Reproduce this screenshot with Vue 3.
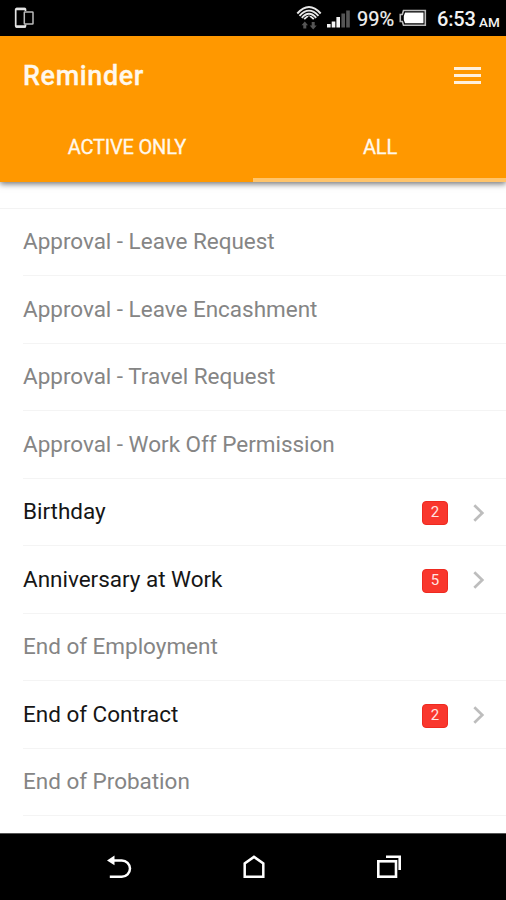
<script setup>
const reminders = [
  { label: 'Approval - Leave Request' },
  { label: 'Approval - Leave Encashment' },
  { label: 'Approval - Travel Request' },
  { label: 'Approval - Work Off Permission' },
  { label: 'Birthday', count: 2 },
  { label: 'Anniversary at Work', count: 5 },
  { label: 'End of Employment' },
  { label: 'End of Contract', count: 2 },
  { label: 'End of Probation' },
]
</script>

<template>
  <div class="phone">
    <div class="status">
      <svg class="device" width="20" height="22" viewBox="0 0 20 22" fill="none" stroke="#e4e4e4">
        <path d="M11.500 4V2.600Q11.500 1.600 10.500 1.600H2.800Q1.700 1.600 1.700 2.600V19Q1.700 20 2.800 20H10.500Q11.500 20 11.500 19V17.500" stroke-width="1.700" />
        <path d="M2 2H11.500M2 19.500H11.500" stroke-width="2.400" />
        <rect x="10.300" y="5" width="8.700" height="12" rx=".6" stroke-width="1.500" stroke="#bbb" />
      </svg>
      <svg class="wifi" width="26" height="26" viewBox="0 0 26 26" fill="none">
        <g stroke="#e8e8e8" stroke-width="1.900">
          <path d="M1.300 8.500Q13 -4.500 24.700 8.500" />
          <path d="M3.500 10.800Q13 .5 22.500 10.800" />
          <path d="M5.800 12.800Q13 4.800 20.200 12.800" />
          <path d="M8.200 14.200Q13 8.800 17.800 14.200" />
        </g>
        <path d="M9 15.500L13 10.800L17 15.500Z" fill="#000" />
        <g fill="#555">
          <path d="M8.800 16.500L12 20.200H10.300V23.500H7.300V20.200H5.500Z" />
          <path d="M17.200 24.500L20.700 20.500H18.700V17H15.700V20.500H13.700Z" />
        </g>
      </svg>
      <svg class="signal" width="24" height="20" viewBox="0 0 24 20">
        <g fill="#f4f4f4">
          <rect x="0" y="15" width="3.600" height="3.500" />
          <rect x="4.700" y="12.500" width="3.600" height="6" />
          <rect x="9.400" y="8" width="3.600" height="10.500" />
        </g>
        <g fill="#555">
          <rect x="14.400" y="4.500" width="3.600" height="14" />
          <rect x="19.200" y="1.500" width="3.600" height="17" />
        </g>
      </svg>
      <span class="percent">99%</span>
      <svg class="battery" width="28" height="18" viewBox="0 0 28 18">
        <path d="M4.500 1.500H26.300V16.300H4.500L3.300 12.500H1.300V5.500H3.300Z" fill="none" stroke="#bbb" stroke-width="1.600" />
        <path d="M6 3.500H24.500V14.300H6L4.800 11V7Z" fill="#fff" />
      </svg>
      <span class="clock">6:53</span><span class="meridiem">AM</span>
    </div>

    <header>
      <div class="bar">
        <h1>Reminder</h1>
        <button class="menu" aria-label="Menu"><i /><i /><i /></button>
      </div>
      <nav>
        <button class="tab"><span>ACTIVE ONLY</span></button>
        <button class="tab selected"><span>ALL</span></button>
      </nav>
    </header>

    <main>
      <ul>
        <li v-for="item in reminders" :key="item.label" :class="{ on: item.count }">
          <span class="label">{{ item.label }}</span>
          <template v-if="item.count">
            <span class="badge">{{ item.count }}</span>
            <svg class="chevron" width="12" height="18" viewBox="0 0 12 18" fill="none" stroke="#bdbdbd" stroke-width="2.700">
              <path d="M1.300 1.200L9.300 9L1.300 16.800" />
            </svg>
          </template>
        </li>
      </ul>
    </main>

    <footer>
      <svg width="26" height="26" viewBox="0 0 26 26" fill="none" stroke="#fff" stroke-width="2.500">
        <path d="M8 6.400H15.800A8.200 8.200 0 0 1 15.800 22.800H3.800" />
        <path d="M1 6.400L8.500 1.600V11.200Z" fill="#fff" stroke="none" />
      </svg>
      <svg width="26" height="26" viewBox="0 0 26 26" fill="none" stroke="#fff" stroke-width="2.500">
        <path d="M3.700 22.800V9.500L13 2.900L22.300 9.500V22.800Z" />
      </svg>
      <svg width="26" height="26" viewBox="0 0 26 26" fill="none" stroke="#fff" stroke-width="2.600">
        <rect x="2.300" y="7.300" width="17.700" height="15.400" />
        <path d="M10 2.800H23.700V16" />
      </svg>
    </footer>
  </div>
</template>

<style>
body { margin: 0; background: #fff; }
</style>

<style scoped>
.phone {
  width: 506px;
  height: 900px;
  display: flex;
  flex-direction: column;
  overflow: hidden;
  background: #fff;
  font-family: Roboto, sans-serif;
}
button { border: 0; padding: 0; background: none; font: inherit; color: inherit; }
.status {
  height: 36px;
  flex: none;
  display: flex;
  align-items: center;
  background: #000;
  color: #f2f2f2;
  white-space: nowrap;
}
.device { margin: 0 auto 0 14px; }
.wifi { margin-right: 5px; }
.signal { margin: 1px 6px 0 0; }
.percent { width: 38px; font-size: 20px; line-height: 36px; padding-top: 2px; margin-right: 4px; -webkit-text-stroke: .2px currentColor; }
.battery { margin-right: 10px; }
.clock { width: 40px; font-size: 20px; font-weight: 500; padding-top: 2px; letter-spacing: -.2px; }
.meridiem { width: 21px; font-size: 13.500px; font-weight: 500; padding-top: 7px; margin: 0 6px 0 2px; }
header {
  height: 146px;
  flex: none;
  display: flex;
  flex-direction: column;
  background: #ff9800;
  color: #fff8ec;
  box-shadow: 0 2px 6px rgba(0, 0, 0, .55);
}
.bar { height: 78px; display: flex; align-items: center; justify-content: space-between; padding: 0 25px 0 23px; }
h1 { margin: 2px 0 0; font-size: 27px; line-height: 32px; font-weight: 500; letter-spacing: .6px; -webkit-text-stroke: .3px currentColor; }
.menu { width: 27px; display: flex; flex-direction: column; gap: 4px; }
.menu i { height: 3px; background: #fff0dc; }
nav { flex: 1; display: flex; }
.tab { flex: 1; display: flex; justify-content: center; padding-top: 21px; box-sizing: border-box; font-size: 20px; line-height: 24px; letter-spacing: -.2px; border-bottom: 4px solid transparent; -webkit-text-stroke: .3px currentColor; }
.tab span { margin-left: 1px; }
.tab.selected { border-bottom-color: #ffc46b; }
main { flex: 1; padding-top: 26px; }
ul { list-style: none; margin: 0; padding: 0 0 0 23px; border-top: 1px solid #f3f3f3; }
li {
  height: 67.440px;
  box-sizing: border-box;
  display: flex;
  align-items: center;
  padding-right: 21px;
  border-bottom: 1px solid #f4f4f4;
  color: #858585;
  font-size: 22.500px;
}
li.on { color: #161616; }
.label { flex: 1; letter-spacing: -.02px; padding-bottom: 1.500px; }
.badge {
  width: 26px;
  height: 24px;
  box-sizing: border-box;
  margin: 3px 25px 0 0;
  border: 1px solid #ee2a20;
  border-radius: 4px;
  background: #f9372d;
  color: #ffe5e2;
  font-size: 15px;
  line-height: 21px;
  text-align: center;
}
.chevron { margin-top: 2px; }
footer {
  height: 67px;
  flex: none;
  box-sizing: border-box;
  display: flex;
  align-items: center;
  justify-content: space-between;
  padding: 0 104px 0 106px;
  border-top: 1px solid #555;
  background: #000;
}
</style>
